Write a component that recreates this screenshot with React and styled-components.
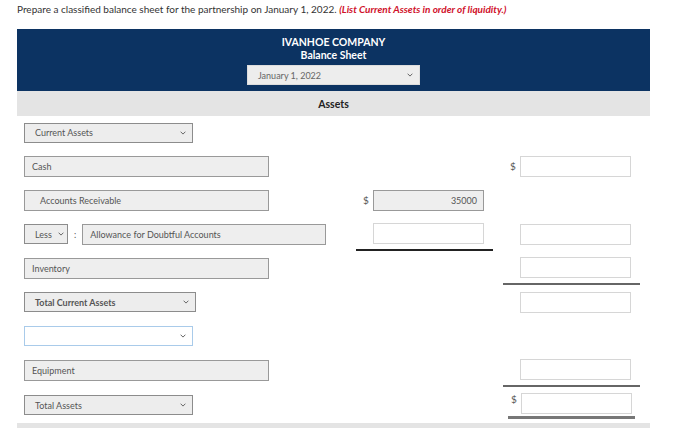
import React from "react";
import styled, { createGlobalStyle } from "styled-components";

const Global = createGlobalStyle`
  body {
    margin: 0;
    background: #fff;
    font-family: Lato, "Open Sans", sans-serif;
    color: #333;
  }
`;

const Page = styled.div`
  width: 633px;
  padding: 2px 17px 0 17px;
`;

const Prompt = styled.p`
  margin: 0 0 13px;
  font-size: 10px;
  line-height: 14px;
  color: #333;
`;

const Hint = styled.em`
  font-weight: bold;
  color: #d0102a;
`;

const Header = styled.div`
  background: #0c3362;
  color: #fff;
  padding: 7px 0 6px;
  display: flex;
  flex-direction: column;
  align-items: center;
  font-size: 10.5px;
  font-weight: bold;
  line-height: 13px;
`;

const Section = styled.div`
  background: #e4e4e4;
  height: 25px;
  display: flex;
  align-items: center;
  justify-content: center;
  font-size: 10.5px;
  font-weight: bold;
  color: #222;
`;

const Row = styled.div`
  display: grid;
  grid-template-columns: 339px 137px 10px 137px;
  height: ${(p) => p.$h || 34}px;
`;

const LabelCell = styled.div`
  display: flex;
  align-items: center;
  gap: 6px;
  padding-left: 7px;
`;

const AmountCell = styled.div`
  grid-column: ${(p) => p.$col};
  display: flex;
  align-items: center;
  padding-left: 7px;
  border-bottom: ${(p) => (p.$rule ? p.$rule : "none")};
  box-sizing: border-box;
`;

const TotalWrap = styled.div`
  grid-column: 4;
  margin: 6px 5px 4px;
  padding-left: 3px;
  display: flex;
  align-items: flex-start;
  border-bottom: 3px solid #777;
`;

const Dollar = styled.span`
  width: 10px;
  flex: none;
  font-size: 10px;
  color: #555;
`;

const Field = styled.div`
  box-sizing: border-box;
  width: ${(p) => p.$w}px;
  height: 21px;
  display: flex;
  align-items: center;
  justify-content: ${(p) => (p.$right ? "flex-end" : "flex-start")};
  padding: 0 ${(p) => (p.$right ? 6 : 7)}px 0 ${(p) => p.$indent || 7}px;
  background: ${(p) => (p.$filled ? "#eeeeee" : "#fff")};
  border: 1px solid ${(p) => (p.$filled ? "#999" : "#d6d6d6")};
  font-size: 9px;
  color: #555;
  white-space: nowrap;
`;

const Select = styled.div`
  box-sizing: border-box;
  width: ${(p) => p.$w}px;
  height: 20px;
  display: flex;
  align-items: center;
  justify-content: space-between;
  padding: 0 ${(p) => p.$pr || 6}px 0 10px;
  background: ${(p) => (p.$blank ? "#fff" : "#ededed")};
  border: 1px solid ${(p) => (p.$blank ? "#a9cbea" : "#8c8c8c")};
  font-size: 9px;
  font-weight: ${(p) => (p.$bold ? "bold" : "normal")};
  color: #555;
  white-space: nowrap;
`;

const DateSelect = styled(Select)`
  margin-top: 3px;
  padding-left: 10px;
  font-weight: normal;
  color: #666;
  border-color: #ddd;
`;

const Colon = styled.span`
  font-size: 9px;
  color: #555;
`;

const BottomBar = styled.div`
  background: #e4e4e4;
  height: 25px;
`;

const Chevron = () => (
  <svg width="6" height="4" viewBox="0 0 6 4">
    <path d="M0.6 0.7 L3 3.1 L5.4 0.7" fill="none" stroke="#666" strokeWidth="1" />
  </svg>
);

const SelectBox = ({ w, pr, bold, blank, children }) => (
  <Select $w={w} $pr={pr} $bold={bold} $blank={blank}>
    <span>{children}</span>
    <Chevron />
  </Select>
);

export default function App() {
  return (
    <>
      <Global />
      <Page>
        <Prompt>
          Prepare a classified balance sheet for the partnership on January 1, 2022.{" "}
          <Hint>(List Current Assets in order of liquidity.)</Hint>
        </Prompt>

        <Header>
          <div>IVANHOE COMPANY</div>
          <div>Balance Sheet</div>
          <DateSelect $w={173}>
            <span>January 1, 2022</span>
            <Chevron />
          </DateSelect>
        </Header>
        <Section>Assets</Section>

        <Row $h={33}>
          <LabelCell>
            <SelectBox w={169}>Current Assets</SelectBox>
          </LabelCell>
        </Row>

        <Row>
          <LabelCell>
            <Field $w={245} $filled>Cash</Field>
          </LabelCell>
          <AmountCell $col={4}>
            <Dollar>$</Dollar>
            <Field $w={111} />
          </AmountCell>
        </Row>

        <Row>
          <LabelCell>
            <Field $w={245} $filled $indent={15}>Accounts Receivable</Field>
          </LabelCell>
          <AmountCell $col={2}>
            <Dollar>$</Dollar>
            <Field $w={111} $filled $right>35000</Field>
          </AmountCell>
        </Row>

        <Row>
          <LabelCell>
            <SelectBox w={44} pr={3}>Less</SelectBox>
            <Colon>:</Colon>
            <Field $w={244} $filled>Allowance for Doubtful Accounts</Field>
          </LabelCell>
          <AmountCell $col={2} $rule="2px solid #222">
            <Dollar />
            <Field $w={111} />
          </AmountCell>
          <AmountCell $col={4}>
            <Dollar />
            <Field $w={111} />
          </AmountCell>
        </Row>

        <Row>
          <LabelCell>
            <Field $w={245} $filled>Inventory</Field>
          </LabelCell>
          <AmountCell $col={4} $rule="2px solid #666">
            <Dollar />
            <Field $w={111} />
          </AmountCell>
        </Row>

        <Row>
          <LabelCell>
            <SelectBox w={172} bold>Total Current Assets</SelectBox>
          </LabelCell>
          <AmountCell $col={4}>
            <Dollar />
            <Field $w={111} />
          </AmountCell>
        </Row>

        <Row>
          <LabelCell>
            <SelectBox w={169} blank />
          </LabelCell>
        </Row>

        <Row>
          <LabelCell>
            <Field $w={245} $filled>Equipment</Field>
          </LabelCell>
          <AmountCell $col={4} $rule="2px solid #666">
            <Dollar />
            <Field $w={111} />
          </AmountCell>
        </Row>

        <Row $h={36}>
          <LabelCell>
            <SelectBox w={169}>Total Assets</SelectBox>
          </LabelCell>
          <TotalWrap>
            <Dollar>$</Dollar>
            <Field $w={111} />
          </TotalWrap>
        </Row>

        <BottomBar />
      </Page>
    </>
  );
}
